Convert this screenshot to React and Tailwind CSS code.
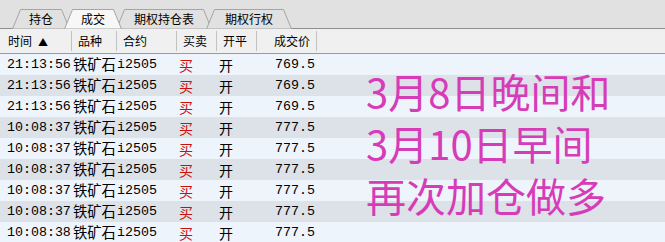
import React from "react";

const CJK = { fontFamily: '"Noto Sans CJK SC", "Noto Sans", sans-serif' };

const tabs = [
  { label: "持仓", w: 58 },
  { label: "成交", w: 58, active: true },
  { label: "期权持仓表", w: 96 },
  { label: "期权行权", w: 86 },
];

function Tab({ label, w, active, first }) {
  const h = 19;
  const s = 8;
  return (
    <div
      className={`relative flex h-[19px] items-center justify-center ${first ? "" : "-ml-[6px]"} ${active ? "z-10" : ""}`}
      style={{ width: w }}
    >
      <svg className="absolute inset-0" width={w} height={h + 1} viewBox={`0 0 ${w} ${h + 1}`}>
        <polygon
          points={`0.5,${h + 1} ${s + 0.5},0.5 ${w - s - 0.5},0.5 ${w - 0.5},${h + 1}`}
          fill={active ? "#f7f7f7" : "#e1e1e1"}
          stroke="#a5a5a5"
          strokeWidth="1"
        />
      </svg>
      <span className="relative text-[12px] leading-none text-black" style={CJK}>
        {label}
      </span>
    </div>
  );
}

const rows = [
  ["21:13:56", "769.5"],
  ["21:13:56", "769.5"],
  ["21:13:56", "769.5"],
  ["10:08:37", "777.5"],
  ["10:08:37", "777.5"],
  ["10:08:37", "777.5"],
  ["10:08:37", "777.5"],
  ["10:08:37", "777.5"],
  ["10:08:38", "777.5"],
];

const MONO = { fontFamily: '"Liberation Mono", "DejaVu Sans Mono", monospace' };

export default function App() {
  return (
    <div className="relative h-[242px] w-[665px] overflow-hidden bg-[#eef4fb]">
      {/* tab strip */}
      <div className="flex h-[29px] items-end border-b border-[#8e8e8e] bg-[#e1e1e1] pl-[12px]">
        {tabs.map((t, i) => (
          <Tab key={t.label} {...t} first={i === 0} />
        ))}
      </div>
      {/* header */}
      <div className="flex h-[25px] items-stretch border-b border-[#9a9a9a] bg-[#f0f0f0] text-[12px] text-black" style={CJK}>
        <div className="my-[2px] flex w-[72px] items-center gap-[6px] border-r border-[#c2c2c2] pl-[8px]">
          <span>时间</span>
          <span className="text-[10px]">▲</span>
        </div>
        <div className="my-[2px] flex w-[45px] items-center border-r border-[#c2c2c2] pl-[6px]">品种</div>
        <div className="my-[2px] flex w-[60px] items-center border-r border-[#c2c2c2] pl-[6px]">合约</div>
        <div className="my-[2px] flex w-[40px] items-center border-r border-[#c2c2c2] pl-[6px]">买卖</div>
        <div className="my-[2px] flex w-[40px] items-center border-r border-[#c2c2c2] pl-[6px]">开平</div>
        <div className="my-[2px] flex w-[60px] items-center justify-end border-r border-[#c2c2c2] pr-[6px]">成交价</div>
      </div>
      {/* rows */}
      <div className="flex flex-col">
        {rows.map(([t, p], i) => (
          <div
            key={i}
            className={`flex h-[21px] items-center text-black ${i % 2 === 1 ? "bg-[#dde1e8]" : "bg-[#eef4fb]"}`}
          >
            <div className="w-[72px] pl-[7px] text-[13.3px] leading-none" style={MONO}>{t}</div>
            <div className="w-[45px] pl-[1px] text-[14.3px] leading-none" style={CJK}>铁矿石</div>
            <div className="w-[60px] text-[13.3px] leading-none" style={MONO}>i2505</div>
            <div className="w-[40px] pl-[2px] text-[14px] leading-none text-[#c81010]" style={CJK}>买</div>
            <div className="w-[40px] pl-[2px] text-[14px] leading-none" style={CJK}>开</div>
            <div className="w-[60px] pr-[2px] text-right text-[13.3px] leading-none" style={MONO}>{p}</div>
          </div>
        ))}
      </div>
      {/* annotation */}
      <div
        className="absolute left-[366px] top-[65px] flex flex-col text-[40px] font-normal leading-[52px] text-[#d63cb8]"
        style={CJK}
      >
        <span>3月8日晚间和</span>
        <span>3月10日早间</span>
        <span>再次加仓做多</span>
      </div>
    </div>
  );
}
